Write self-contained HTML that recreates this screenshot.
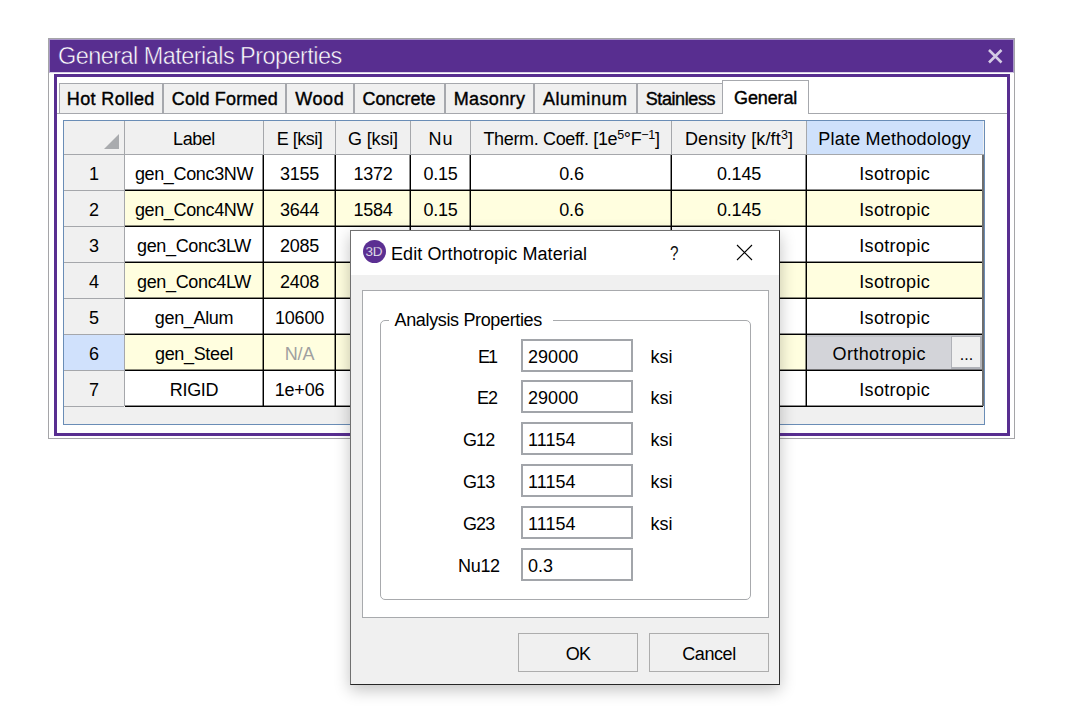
<!DOCTYPE html>
<html><head><meta charset="utf-8">
<style>
*{box-sizing:border-box;margin:0;padding:0}
html,body{width:1077px;height:719px;background:#fff;overflow:hidden;position:relative;font-family:"Liberation Sans",sans-serif;color:#000}
.a{position:absolute}
.t{position:absolute;white-space:nowrap}
sup{font-size:12.5px;line-height:0;vertical-align:0;position:relative;top:-6px}
</style></head><body>
<div class="a" style="left:48px;top:38px;width:967px;height:401px;border:1px solid #a5a5a8;background:#fff"></div>
<div class="a" style="left:49px;top:39px;width:965px;height:34px;background:#582e90;border:1px solid #a896c8;border-bottom-color:#d6cde6"></div>
<div class="t" style="top:42.46px;font-size:23.5px;line-height:28px;letter-spacing:-0.55px;color:#ffffff;left:58px;-webkit-text-stroke:0.6px rgba(88,46,144,0.85)">General Materials Properties</div>
<svg class="a" style="left:986px;top:47px" width="18" height="18" viewBox="0 0 18 18"><path d="M3 3 L15.5 15.5 M15.5 3 L3 15.5" stroke="#d4cce4" stroke-width="2.6"/></svg>
<div class="a" style="left:54px;top:74px;width:956px;height:362px;border:3px solid #582e90;background:#fff"></div>
<div class="a" style="left:57px;top:113px;width:950px;height:1px;background:#a6a8ad"></div>
<div class="a" style="left:59px;top:83px;width:104px;height:31px;background:#f0f0f0;border:1px solid #a6a8ad"></div>
<div class="t" style="top:87.76px;font-size:18px;line-height:22px;letter-spacing:0.39px;left:66.8px;-webkit-text-stroke:0.4px #000">Hot Rolled</div>
<div class="a" style="left:163px;top:83px;width:123px;height:31px;background:#f0f0f0;border:1px solid #a6a8ad"></div>
<div class="t" style="top:87.76px;font-size:18px;line-height:22px;letter-spacing:0.19px;left:171.8px;-webkit-text-stroke:0.4px #000">Cold Formed</div>
<div class="a" style="left:286px;top:83px;width:68px;height:31px;background:#f0f0f0;border:1px solid #a6a8ad"></div>
<div class="t" style="top:87.76px;font-size:18px;line-height:22px;letter-spacing:0.6px;left:295.2px;-webkit-text-stroke:0.4px #000">Wood</div>
<div class="a" style="left:354px;top:83px;width:91px;height:31px;background:#f0f0f0;border:1px solid #a6a8ad"></div>
<div class="t" style="top:87.76px;font-size:18px;line-height:22px;left:362.4px;-webkit-text-stroke:0.4px #000">Concrete</div>
<div class="a" style="left:445px;top:83px;width:89px;height:31px;background:#f0f0f0;border:1px solid #a6a8ad"></div>
<div class="t" style="top:87.76px;font-size:18px;line-height:22px;letter-spacing:0.37px;left:453.7px;-webkit-text-stroke:0.4px #000">Masonry</div>
<div class="a" style="left:534px;top:83px;width:103px;height:31px;background:#f0f0f0;border:1px solid #a6a8ad"></div>
<div class="t" style="top:87.76px;font-size:18px;line-height:22px;letter-spacing:0.6px;left:542.9px;-webkit-text-stroke:0.4px #000">Aluminum</div>
<div class="a" style="left:637px;top:83px;width:86px;height:31px;background:#f0f0f0;border:1px solid #a6a8ad"></div>
<div class="t" style="top:87.76px;font-size:18px;line-height:22px;letter-spacing:-0.4px;left:645.7px;-webkit-text-stroke:0.4px #000">Stainless</div>
<div class="a" style="left:722px;top:80px;width:87px;height:34px;background:#fff;border:1px solid #a6a8ad;border-bottom:none"></div>
<div class="t" style="top:86.76px;font-size:18px;line-height:22px;letter-spacing:-0.12px;left:734px;-webkit-text-stroke:0.4px #000">General</div>
<div class="a" style="left:63px;top:120px;width:922px;height:305px;border:1px solid #6a8db6;background:#f0f0f0"></div>
<div class="a" style="left:807px;top:121px;width:176px;height:33px;background:#cfe1fb"></div>
<div class="t" style="top:127.76px;font-size:18px;line-height:22px;letter-spacing:-0.45px;left:125px;width:138px;text-align:center;padding-left:-0.45px;">Label</div>
<div class="t" style="top:127.76px;font-size:18px;line-height:22px;letter-spacing:-0.5px;left:264px;width:71px;text-align:center;padding-left:-0.5px;">E [ksi]</div>
<div class="t" style="top:127.76px;font-size:18px;line-height:22px;letter-spacing:-0.15px;left:336px;width:74px;text-align:center;padding-left:-0.15px;">G [ksi]</div>
<div class="t" style="top:127.76px;font-size:18px;line-height:22px;letter-spacing:0.8px;left:411px;width:59px;text-align:center;padding-left:0.8px;">Nu</div>
<div class="t" style="top:127.76px;font-size:18px;line-height:22px;letter-spacing:-0.35px;left:472px;width:199px;text-align:center;padding-left:-0.35px;">Therm. Coeff. [1e<sup>5</sup>°F<sup>&minus;1</sup>]</div>
<div class="t" style="top:127.76px;font-size:18px;line-height:22px;letter-spacing:0.15px;left:672px;width:134px;text-align:center;padding-left:0.15px;">Density [k/ft<sup>3</sup>]</div>
<div class="t" style="top:127.76px;font-size:18px;line-height:22px;letter-spacing:0.2px;left:807px;width:175px;text-align:center;padding-left:0.2px;">Plate Methodology</div>
<svg class="a" style="left:104px;top:134px" width="16" height="16"><path d="M15 0 L15 15 L0 15 Z" fill="#a9abae"/></svg>
<div class="a" style="left:64px;top:154px;width:920px;height:1px;background:#a5a7ab"></div>
<div class="a" style="left:124px;top:121px;width:1px;height:33px;background:#a5a7ab"></div>
<div class="a" style="left:263px;top:121px;width:1px;height:33px;background:#a5a7ab"></div>
<div class="a" style="left:335px;top:121px;width:1px;height:33px;background:#a5a7ab"></div>
<div class="a" style="left:410px;top:121px;width:1px;height:33px;background:#a5a7ab"></div>
<div class="a" style="left:470px;top:121px;width:1px;height:33px;background:#a5a7ab"></div>
<div class="a" style="left:671px;top:121px;width:1px;height:33px;background:#a5a7ab"></div>
<div class="a" style="left:806px;top:121px;width:1px;height:33px;background:#a5a7ab"></div>
<div class="a" style="left:64px;top:155px;width:60px;height:35px;background:#f0f0f0"></div>
<div class="a" style="left:125px;top:155px;width:858px;height:35px;background:#fff"></div>
<div class="t" style="top:162.76px;font-size:18px;line-height:22px;left:64px;width:60px;text-align:center;">1</div>
<div class="t" style="top:162.76px;font-size:18px;line-height:22px;letter-spacing:-0.35px;left:125px;width:138px;text-align:center;padding-left:-0.35px;">gen_Conc3NW</div>
<div class="t" style="top:162.76px;font-size:18px;line-height:22px;letter-spacing:-0.2px;left:264px;width:71px;text-align:center;padding-left:-0.2px;">3155</div>
<div class="t" style="top:162.76px;font-size:18px;line-height:22px;letter-spacing:-0.2px;left:336px;width:74px;text-align:center;padding-left:-0.2px;">1372</div>
<div class="t" style="top:162.76px;font-size:18px;line-height:22px;letter-spacing:-0.2px;left:411px;width:59px;text-align:center;padding-left:-0.2px;">0.15</div>
<div class="t" style="top:162.76px;font-size:18px;line-height:22px;letter-spacing:-0.2px;left:472px;width:199px;text-align:center;padding-left:-0.2px;">0.6</div>
<div class="t" style="top:162.76px;font-size:18px;line-height:22px;letter-spacing:-0.2px;left:672px;width:134px;text-align:center;padding-left:-0.2px;">0.145</div>
<div class="t" style="top:162.76px;font-size:18px;line-height:22px;letter-spacing:0.3px;left:807px;width:175px;text-align:center;padding-left:0.3px;">Isotropic</div>
<div class="a" style="left:64px;top:190px;width:60px;height:1px;background:#a5a7ab"></div>
<div class="a" style="left:125px;top:189px;width:858px;height:1px;background:rgba(0,0,0,0.45)"></div>
<div class="a" style="left:125px;top:190px;width:858px;height:1px;background:#000"></div>
<div class="a" style="left:64px;top:191px;width:60px;height:35px;background:#f0f0f0"></div>
<div class="a" style="left:125px;top:191px;width:858px;height:35px;background:#fffedf"></div>
<div class="t" style="top:198.76px;font-size:18px;line-height:22px;left:64px;width:60px;text-align:center;">2</div>
<div class="t" style="top:198.76px;font-size:18px;line-height:22px;letter-spacing:-0.35px;left:125px;width:138px;text-align:center;padding-left:-0.35px;">gen_Conc4NW</div>
<div class="t" style="top:198.76px;font-size:18px;line-height:22px;letter-spacing:-0.2px;left:264px;width:71px;text-align:center;padding-left:-0.2px;">3644</div>
<div class="t" style="top:198.76px;font-size:18px;line-height:22px;letter-spacing:-0.2px;left:336px;width:74px;text-align:center;padding-left:-0.2px;">1584</div>
<div class="t" style="top:198.76px;font-size:18px;line-height:22px;letter-spacing:-0.2px;left:411px;width:59px;text-align:center;padding-left:-0.2px;">0.15</div>
<div class="t" style="top:198.76px;font-size:18px;line-height:22px;letter-spacing:-0.2px;left:472px;width:199px;text-align:center;padding-left:-0.2px;">0.6</div>
<div class="t" style="top:198.76px;font-size:18px;line-height:22px;letter-spacing:-0.2px;left:672px;width:134px;text-align:center;padding-left:-0.2px;">0.145</div>
<div class="t" style="top:198.76px;font-size:18px;line-height:22px;letter-spacing:0.3px;left:807px;width:175px;text-align:center;padding-left:0.3px;">Isotropic</div>
<div class="a" style="left:64px;top:226px;width:60px;height:1px;background:#a5a7ab"></div>
<div class="a" style="left:125px;top:225px;width:858px;height:1px;background:rgba(0,0,0,0.45)"></div>
<div class="a" style="left:125px;top:226px;width:858px;height:1px;background:#000"></div>
<div class="a" style="left:64px;top:227px;width:60px;height:35px;background:#f0f0f0"></div>
<div class="a" style="left:125px;top:227px;width:858px;height:35px;background:#fff"></div>
<div class="t" style="top:234.76px;font-size:18px;line-height:22px;left:64px;width:60px;text-align:center;">3</div>
<div class="t" style="top:234.76px;font-size:18px;line-height:22px;letter-spacing:-0.35px;left:125px;width:138px;text-align:center;padding-left:-0.35px;">gen_Conc3LW</div>
<div class="t" style="top:234.76px;font-size:18px;line-height:22px;letter-spacing:-0.2px;left:264px;width:71px;text-align:center;padding-left:-0.2px;">2085</div>
<div class="t" style="top:234.76px;font-size:18px;line-height:22px;letter-spacing:0.3px;left:807px;width:175px;text-align:center;padding-left:0.3px;">Isotropic</div>
<div class="a" style="left:64px;top:262px;width:60px;height:1px;background:#a5a7ab"></div>
<div class="a" style="left:125px;top:261px;width:858px;height:1px;background:rgba(0,0,0,0.45)"></div>
<div class="a" style="left:125px;top:262px;width:858px;height:1px;background:#000"></div>
<div class="a" style="left:64px;top:263px;width:60px;height:35px;background:#f0f0f0"></div>
<div class="a" style="left:125px;top:263px;width:858px;height:35px;background:#fffedf"></div>
<div class="t" style="top:270.76px;font-size:18px;line-height:22px;left:64px;width:60px;text-align:center;">4</div>
<div class="t" style="top:270.76px;font-size:18px;line-height:22px;letter-spacing:-0.35px;left:125px;width:138px;text-align:center;padding-left:-0.35px;">gen_Conc4LW</div>
<div class="t" style="top:270.76px;font-size:18px;line-height:22px;letter-spacing:-0.2px;left:264px;width:71px;text-align:center;padding-left:-0.2px;">2408</div>
<div class="t" style="top:270.76px;font-size:18px;line-height:22px;letter-spacing:0.3px;left:807px;width:175px;text-align:center;padding-left:0.3px;">Isotropic</div>
<div class="a" style="left:64px;top:298px;width:60px;height:1px;background:#a5a7ab"></div>
<div class="a" style="left:125px;top:297px;width:858px;height:1px;background:rgba(0,0,0,0.45)"></div>
<div class="a" style="left:125px;top:298px;width:858px;height:1px;background:#000"></div>
<div class="a" style="left:64px;top:299px;width:60px;height:35px;background:#f0f0f0"></div>
<div class="a" style="left:125px;top:299px;width:858px;height:35px;background:#fff"></div>
<div class="t" style="top:306.76px;font-size:18px;line-height:22px;left:64px;width:60px;text-align:center;">5</div>
<div class="t" style="top:306.76px;font-size:18px;line-height:22px;letter-spacing:-0.35px;left:125px;width:138px;text-align:center;padding-left:-0.35px;">gen_Alum</div>
<div class="t" style="top:306.76px;font-size:18px;line-height:22px;letter-spacing:-0.2px;left:264px;width:71px;text-align:center;padding-left:-0.2px;">10600</div>
<div class="t" style="top:306.76px;font-size:18px;line-height:22px;letter-spacing:0.3px;left:807px;width:175px;text-align:center;padding-left:0.3px;">Isotropic</div>
<div class="a" style="left:64px;top:334px;width:60px;height:1px;background:#a5a7ab"></div>
<div class="a" style="left:125px;top:333px;width:858px;height:1px;background:rgba(0,0,0,0.45)"></div>
<div class="a" style="left:125px;top:334px;width:858px;height:1px;background:#000"></div>
<div class="a" style="left:64px;top:335px;width:60px;height:35px;background:#d0e1fc"></div>
<div class="a" style="left:125px;top:335px;width:858px;height:35px;background:#fffedf"></div>
<div class="a" style="left:807px;top:335px;width:175px;height:35px;background:#d3d4d9;border-top:2px solid #c3c5ca"></div>
<div class="a" style="left:951px;top:336px;width:31px;height:33px;background:#f0f0f0;border:1px solid #b0b2b8;border-width:1px 2px 2px 1px"></div>
<div class="t" style="top:343.96px;font-size:16px;line-height:22px;left:952px;width:29px;text-align:center;">...</div>
<div class="t" style="top:342.76px;font-size:18px;line-height:22px;left:64px;width:60px;text-align:center;">6</div>
<div class="t" style="top:342.76px;font-size:18px;line-height:22px;letter-spacing:-0.35px;left:125px;width:138px;text-align:center;padding-left:-0.35px;">gen_Steel</div>
<div class="t" style="top:342.76px;font-size:18px;line-height:22px;letter-spacing:-0.2px;color:#a0a0a0;left:264px;width:71px;text-align:center;padding-left:-0.2px;">N/A</div>
<div class="t" style="top:342.76px;font-size:18px;line-height:22px;letter-spacing:0.39px;left:807px;width:144px;text-align:center;padding-left:0.39px;">Orthotropic</div>
<div class="a" style="left:64px;top:370px;width:60px;height:1px;background:#a5a7ab"></div>
<div class="a" style="left:125px;top:369px;width:858px;height:1px;background:rgba(0,0,0,0.45)"></div>
<div class="a" style="left:125px;top:370px;width:858px;height:1px;background:#000"></div>
<div class="a" style="left:64px;top:371px;width:60px;height:35px;background:#f0f0f0"></div>
<div class="a" style="left:125px;top:371px;width:858px;height:35px;background:#fff"></div>
<div class="t" style="top:378.76px;font-size:18px;line-height:22px;left:64px;width:60px;text-align:center;">7</div>
<div class="t" style="top:378.76px;font-size:18px;line-height:22px;letter-spacing:-0.35px;left:125px;width:138px;text-align:center;padding-left:-0.35px;">RIGID</div>
<div class="t" style="top:378.76px;font-size:18px;line-height:22px;letter-spacing:-0.2px;left:264px;width:71px;text-align:center;padding-left:-0.2px;">1e+06</div>
<div class="t" style="top:378.76px;font-size:18px;line-height:22px;letter-spacing:0.3px;left:807px;width:175px;text-align:center;padding-left:0.3px;">Isotropic</div>
<div class="a" style="left:64px;top:406px;width:60px;height:1px;background:#a5a7ab"></div>
<div class="a" style="left:125px;top:405px;width:858px;height:1px;background:rgba(0,0,0,0.45)"></div>
<div class="a" style="left:125px;top:406px;width:858px;height:1px;background:#000"></div>
<div class="a" style="left:262px;top:155px;width:1px;height:251px;background:rgba(0,0,0,0.45)"></div>
<div class="a" style="left:263px;top:155px;width:1px;height:251px;background:#000"></div>
<div class="a" style="left:334px;top:155px;width:1px;height:251px;background:rgba(0,0,0,0.45)"></div>
<div class="a" style="left:335px;top:155px;width:1px;height:251px;background:#000"></div>
<div class="a" style="left:409px;top:155px;width:1px;height:251px;background:rgba(0,0,0,0.45)"></div>
<div class="a" style="left:410px;top:155px;width:1px;height:251px;background:#000"></div>
<div class="a" style="left:469px;top:155px;width:1px;height:251px;background:rgba(0,0,0,0.45)"></div>
<div class="a" style="left:470px;top:155px;width:1px;height:251px;background:#000"></div>
<div class="a" style="left:670px;top:155px;width:1px;height:251px;background:rgba(0,0,0,0.45)"></div>
<div class="a" style="left:671px;top:155px;width:1px;height:251px;background:#000"></div>
<div class="a" style="left:805px;top:155px;width:1px;height:251px;background:rgba(0,0,0,0.45)"></div>
<div class="a" style="left:806px;top:155px;width:1px;height:251px;background:#000"></div>
<div class="a" style="left:124px;top:155px;width:1px;height:251px;background:#a5a7ab"></div>
<div class="a" style="left:982px;top:155px;width:2px;height:251px;background:#6e6e6e"></div>
<div class="a" style="left:350px;top:230px;width:430px;height:455px;box-shadow:0 5px 15px rgba(0,0,0,0.24)"></div>
<div class="a" style="left:350px;top:230px;width:430px;height:455px;background:#f0f0f0;border:1px solid #707070;border-right-color:#303030;border-bottom-color:#262626"></div>
<div class="a" style="left:351px;top:231px;width:428px;height:44px;background:#fff"></div>
<div class="a" style="left:362.5px;top:240px;width:23px;height:23px;border-radius:50%;background:#5b2f92"></div>
<div class="t" style="top:240.82px;font-size:13.5px;line-height:22px;letter-spacing:-0.2px;color:#fff;left:362px;width:24px;text-align:center;padding-left:-0.2px;-webkit-text-stroke:0.25px #5b2f92">3D</div>
<div class="t" style="top:242.76px;font-size:18px;line-height:22px;letter-spacing:0.08px;left:391px;">Edit Orthotropic Material</div>
<div class="t" style="top:242.37px;font-size:20px;line-height:22px;color:#111;left:670px;transform:scaleX(0.76);transform-origin:0 0">?</div>
<svg class="a" style="left:736px;top:244px" width="17" height="17"><path d="M1 1 L16 16 M16 1 L1 16" stroke="#000" stroke-width="1.1"/></svg>
<div class="a" style="left:362px;top:290px;width:407px;height:328px;background:#fff;border:1px solid #a8aaad"></div>
<div class="a" style="left:380px;top:320px;width:371px;height:280px;border:1px solid #a8aaad;border-radius:5px"></div>
<div class="a" style="left:389px;top:312px;width:164px;height:16px;background:#fff"></div>
<div class="t" style="top:309.16px;font-size:18px;line-height:22px;letter-spacing:-0.35px;left:394.5px;">Analysis Properties</div>
<div class="t" style="top:345.96px;font-size:18px;line-height:22px;letter-spacing:-2.0px;left:478px;">E1</div>
<div class="a" style="left:521px;top:339px;width:112px;height:33px;background:#fff;border:2px solid #a2a5aa"></div>
<div class="t" style="top:345.96px;font-size:18px;line-height:22px;letter-spacing:0.05px;left:528px;">29000</div>
<div class="t" style="top:345.96px;font-size:18px;line-height:22px;left:650.5px;">ksi</div>
<div class="t" style="top:387.16px;font-size:18px;line-height:22px;letter-spacing:-1.0px;left:477px;">E2</div>
<div class="a" style="left:521px;top:380px;width:112px;height:33px;background:#fff;border:2px solid #a2a5aa"></div>
<div class="t" style="top:387.16px;font-size:18px;line-height:22px;letter-spacing:0.05px;left:528px;">29000</div>
<div class="t" style="top:387.16px;font-size:18px;line-height:22px;left:650.5px;">ksi</div>
<div class="t" style="top:429.16px;font-size:18px;line-height:22px;letter-spacing:-0.9px;left:463px;">G12</div>
<div class="a" style="left:521px;top:422px;width:112px;height:33px;background:#fff;border:2px solid #a2a5aa"></div>
<div class="t" style="top:429.16px;font-size:18px;line-height:22px;letter-spacing:0.05px;left:528px;">11154</div>
<div class="t" style="top:429.16px;font-size:18px;line-height:22px;left:650.5px;">ksi</div>
<div class="t" style="top:471.16px;font-size:18px;line-height:22px;letter-spacing:-0.9px;left:463px;">G13</div>
<div class="a" style="left:521px;top:464px;width:112px;height:33px;background:#fff;border:2px solid #a2a5aa"></div>
<div class="t" style="top:471.16px;font-size:18px;line-height:22px;letter-spacing:0.05px;left:528px;">11154</div>
<div class="t" style="top:471.16px;font-size:18px;line-height:22px;left:650.5px;">ksi</div>
<div class="t" style="top:513.16px;font-size:18px;line-height:22px;letter-spacing:-0.9px;left:463px;">G23</div>
<div class="a" style="left:521px;top:506px;width:112px;height:33px;background:#fff;border:2px solid #a2a5aa"></div>
<div class="t" style="top:513.16px;font-size:18px;line-height:22px;letter-spacing:0.05px;left:528px;">11154</div>
<div class="t" style="top:513.16px;font-size:18px;line-height:22px;left:650.5px;">ksi</div>
<div class="t" style="top:555.16px;font-size:18px;line-height:22px;letter-spacing:-0.3px;left:458px;">Nu12</div>
<div class="a" style="left:521px;top:548px;width:112px;height:33px;background:#fff;border:2px solid #a2a5aa"></div>
<div class="t" style="top:555.16px;font-size:18px;line-height:22px;letter-spacing:0.05px;left:528px;">0.3</div>
<div class="a" style="left:518px;top:633px;width:120px;height:39px;background:#f0f0f0;border:1px solid #adadad"></div>
<div class="a" style="left:649px;top:633px;width:120px;height:39px;background:#f0f0f0;border:1px solid #adadad"></div>
<div class="t" style="top:643.16px;font-size:18px;line-height:22px;letter-spacing:-0.8px;left:518px;width:120px;text-align:center;padding-left:-0.8px;">OK</div>
<div class="t" style="top:643.16px;font-size:18px;line-height:22px;letter-spacing:-0.4px;left:649px;width:120px;text-align:center;padding-left:-0.4px;">Cancel</div>
</body></html>
